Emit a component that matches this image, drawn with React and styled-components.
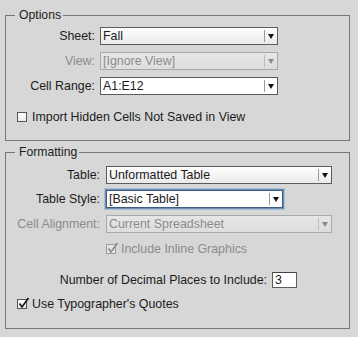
import React from "react"
import styled, { createGlobalStyle, css } from 'styled-components'

const GlobalStyle = createGlobalStyle`
  html, body {
    margin: 0;
    padding: 0;
    background: #d7d7d7;
  }
  body {
    font-family: "Liberation Sans", Arial, sans-serif;
    font-size: 12.4px;
    color: #1c1c1c;
  }
`

const Page = styled.div`
  width: 358px;
  height: 337px;
  padding: 8px 0 0 5px;
  box-sizing: border-box;
  display: flex;
  flex-direction: column;
  gap: 4px;
`

const Group = styled.fieldset`
  width: 345px;
  box-sizing: border-box;
  margin: 0;
  padding: ${props => props.pad};
  border: 1px solid #777;
  display: flex;
  flex-direction: column;
  min-inline-size: 0;
`

const Legend = styled.legend`
  margin-left: 9px;
  padding: 0 2px 0 4px;
  font-size: 12.2px;
  line-height: 14px;
  color: #1c1c1c;
`

const Row = styled.div`
  display: flex;
  align-items: center;
  height: ${props => props.h || 18}px;
  margin-top: ${props => props.mt || 0}px;
  padding-left: ${props => props.indent || 0}px;
`

const Label = styled.span`
  width: ${props => props.w}px;
  margin-right: ${props => props.gap}px;
  text-align: right;
  white-space: nowrap;
  line-height: 14px;
  color: ${props => props.disabled ? '#8c8c8c' : '#1c1c1c'};
`

const Select = styled.div`
  position: relative;
  width: ${props => props.w}px;
  height: ${props => props.h || 18}px;
  box-sizing: border-box;
  display: flex;
  align-items: center;
  padding-left: 2px;
  border: 1px solid #5c5c5c;
  background: linear-gradient(#ffffff, #eaeaea);
  color: #1c1c1c;
  white-space: nowrap;
  overflow: hidden;
  ${props => props.white && css`
    background: #ffffff;
  `}
  ${props => props.disabled && css`
    border-color: #a9a9a9;
    background: linear-gradient(#e6e6e6, #dedede);
    color: #8c8c8c;
  `}
  ${props => props.focused && css`
    box-shadow: 0 0 0 1px #6f8fb0, 0 0 0 2px #a9bfd6;
    border-color: #3d5e80;
  `}
`

const Arrow = styled.div`
  position: absolute;
  right: 0;
  top: 2px;
  bottom: 2px;
  width: 12px;
  border-left: 1px solid ${props => props.disabled ? '#bdbdbd' : '#9a9a9a'};
  display: flex;
  align-items: center;
  justify-content: center;
  &::after {
    content: '';
    border-left: 3.5px solid transparent;
    border-right: 3.5px solid transparent;
    border-top: 5px solid ${props => props.disabled ? '#8a8a8a' : '#111'};
    margin-top: 1px;
  }
`

const Box = styled.span`
  width: 10px;
  height: 10px;
  box-sizing: border-box;
  border: 1px solid ${props => props.disabled ? '#9c9c9c' : '#555'};
  background: ${props => props.disabled ? '#e4e4e4' : 'linear-gradient(#ffffff, #ececec)'};
  margin-right: 5px;
  position: relative;
  flex: none;
  svg {
    position: absolute;
    left: 0;
    top: -3px;
  }
`

const CheckText = styled.span`
  line-height: 14px;
  color: ${props => props.disabled ? '#8c8c8c' : '#1c1c1c'};
`

const NumberInput = styled.div`
  width: 25px;
  height: 16px;
  box-sizing: border-box;
  border: 1px solid #5c5c5c;
  border-top-color: #444;
  background: #fff;
  padding-left: 2px;
  line-height: 14px;
`

const Checkbox = ({ checked, disabled, children }) => (
  <>
    <Box disabled={disabled}>
      {checked && (
        <svg width="12" height="12" viewBox="0 0 12 12">
          <path d="M1.5 6.5 L4 10 L10.5 1" fill="none"
            stroke={disabled ? '#8a8a8a' : '#111'} strokeWidth="1.6" />
        </svg>
      )}
    </Box>
    <CheckText disabled={disabled}>{children}</CheckText>
  </>
)

const Dropdown = ({ w, value, disabled, white, focused }) => (
  <Select w={w} disabled={disabled} white={white} focused={focused}>
    {value}
    <Arrow disabled={disabled} />
  </Select>
)

function App() {
  return (
    <Page>
      <GlobalStyle />
      <Group pad="0 0 16px 0">
        <Legend>Options</Legend>
        <Row mt={5}>
          <Label w={89} gap={5}>Sheet:</Label>
          <Dropdown w={178} value="Fall" />
        </Row>
        <Row mt={7}>
          <Label w={89} gap={5} disabled>View:</Label>
          <Dropdown w={178} value="[Ignore View]" disabled />
        </Row>
        <Row mt={7}>
          <Label w={89} gap={5}>Cell Range:</Label>
          <Dropdown w={178} value="A1:E12" white />
        </Row>
        <Row mt={15} h={14} indent={11}>
          <Checkbox>Import Hidden Cells Not Saved in View</Checkbox>
        </Row>
      </Group>

      <Group pad="0 0 17px 0">
        <Legend>Formatting</Legend>
        <Row mt={7}>
          <Label w={94} gap={6}>Table:</Label>
          <Dropdown w={226} value="Unformatted Table" />
        </Row>
        <Row mt={6}>
          <Label w={94} gap={6}>Table Style:</Label>
          <Dropdown w={177} value="[Basic Table]" white focused />
        </Row>
        <Row mt={7}>
          <Label w={94} gap={6} disabled>Cell Alignment:</Label>
          <Dropdown w={226} value="Current Spreadsheet" disabled />
        </Row>
        <Row mt={9} h={14} indent={100}>
          <Checkbox checked disabled>Include Inline Graphics</Checkbox>
        </Row>
        <Row mt={16} h={16}>
          <Label w={261} gap={5}>Number of Decimal Places to Include:</Label>
          <NumberInput>3</NumberInput>
        </Row>
        <Row mt={9} h={14} indent={11}>
          <Checkbox checked>Use Typographer's Quotes</Checkbox>
        </Row>
      </Group>
    </Page>
  )
}

export default App
